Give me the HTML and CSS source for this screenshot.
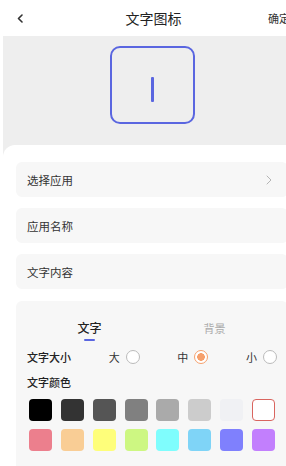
FILE: index.html
```html
<!DOCTYPE html>
<html lang="zh">
<head>
<meta charset="utf-8">
<title>文字图标</title>
<link rel="stylesheet" href="styles.css">
</head>
<body>
<div class="page">
  <header class="nav">
    <span class="nav-back">
      <svg width="6" height="9" viewBox="0 0 6 9"><path d="M5 1 L1.5 4.5 L5 8" fill="none" stroke="#333" stroke-width="1.6" stroke-linecap="round" stroke-linejoin="round"/></svg>
    </span>
    <h1 class="nav-title">文字图标</h1>
    <span class="nav-ok">确定</span>
  </header>

  <section class="preview">
    <div class="icon-box"><span class="icon-bar"></span></div>
  </section>

  <section class="sheet">
    <div class="field">
      <span>选择应用</span>
      <svg class="chev" width="6" height="10" viewBox="0 0 6 10"><path d="M1 1 L5 5 L1 9" fill="none" stroke="#b5b5b5" stroke-width="1" stroke-linecap="round" stroke-linejoin="round"/></svg>
    </div>
    <div class="field"><span>应用名称</span></div>
    <div class="field"><span>文字内容</span></div>

    <div class="panel">
      <div class="tabs">
        <div class="tab active"><span>文字</span><i class="tab-line"></i></div>
        <div class="tab"><span>背景</span></div>
      </div>
      <div class="size-row">
        <span class="label">文字大小</span>
        <span class="opt">大<i class="radio"></i></span>
        <span class="opt">中<i class="radio on"></i></span>
        <span class="opt">小<i class="radio"></i></span>
      </div>
      <div class="label color-label">文字颜色</div>
      <div class="swatches">
        <i class="sw" style="background:#000000"></i>
        <i class="sw" style="background:#333333"></i>
        <i class="sw" style="background:#555555"></i>
        <i class="sw" style="background:#808080"></i>
        <i class="sw" style="background:#aaaaaa"></i>
        <i class="sw" style="background:#cccccc"></i>
        <i class="sw" style="background:#f0f1f4"></i>
        <i class="sw sel" style="background:#ffffff"></i>
      </div>
      <div class="swatches">
        <i class="sw" style="background:#ec7f8d"></i>
        <i class="sw" style="background:#f9cd95"></i>
        <i class="sw" style="background:#fefe7a"></i>
        <i class="sw" style="background:#cdf782"></i>
        <i class="sw" style="background:#7ffdfd"></i>
        <i class="sw" style="background:#7fd4f7"></i>
        <i class="sw" style="background:#7f80fd"></i>
        <i class="sw" style="background:#c27ffd"></i>
      </div>
    </div>
  </section>
</div>
</body>
</html>
```

FILE: styles.css
```css
* { box-sizing: border-box; margin: 0; padding: 0; }
html, body { width: 286px; height: 466px; overflow: hidden; background: #ffffff; }
body {
  font-family: "Noto Sans CJK SC", "Noto Sans", sans-serif;
  color: #333333;
}
.page { width: 304px; }

.nav {
  height: 36px;
  display: grid;
  grid-template-columns: 60px 1fr 60px;
  align-items: center;
  padding: 0 14px 0 17px;
}
.nav-back { display: flex; align-items: center; padding-top: 1px; }
.nav-title {
  text-align: center;
  font-size: 14px;
  font-weight: 400;
  color: #222222;
  line-height: 20px;
}
.nav-ok {
  justify-self: end;
  font-size: 11px;
  color: #333333;
  line-height: 16px;
}

.preview {
  margin-left: 3px;
  background: #eeeeee;
  height: 121px;
  display: flex;
  justify-content: center;
  padding-top: 10px;
  padding-right: 3px;
}
.icon-box {
  width: 85px;
  height: 78px;
  border: 2px solid #5a66e0;
  border-radius: 10px;
  display: flex;
  align-items: center;
  justify-content: center;
}
.icon-bar {
  width: 2.5px;
  height: 25px;
  background: #5a66e0;
  border-radius: 1px;
  margin-left: 1px;
  margin-top: 9px;
}

.sheet {
  position: relative;
  margin-top: -12px;
  margin-left: 3px;
  background: #ffffff;
  border-radius: 12px 12px 0 0;
  padding: 17px 16px 0 13px;
}

.field {
  height: 35px;
  background: #f7f7f7;
  border-radius: 6px;
  display: flex;
  align-items: center;
  justify-content: space-between;
  padding: 0 16px 0 11px;
  font-size: 11.5px;
  color: #333333;
  margin-bottom: 11px;
}
.chev { display: block; }

.panel {
  margin-top: 12px;
  background: #f7f7f7;
  border-radius: 6px;
  padding: 19px 11px 20px;
}
.tabs { display: flex; }
.tab {
  flex: 1;
  display: flex;
  flex-direction: column;
  align-items: center;
  font-size: 11px;
  line-height: 16px;
  color: #aaaaaa;
  height: 21px;
}
.tab.active { color: #222222; font-weight: 500; font-size: 12px; }
.tab-line {
  display: block;
  width: 11px;
  height: 2px;
  border-radius: 1px;
  background: #5a66e0;
  margin-top: 3px;
}

.size-row {
  margin-top: 6px;
  height: 20px;
  display: flex;
  align-items: center;
  justify-content: space-between;
}
.label {
  font-size: 11px;
  font-weight: 500;
  color: #222222;
  line-height: 16px;
}
.opt {
  display: flex;
  align-items: center;
  gap: 6px;
  font-size: 11px;
  color: #333333;
}
.radio {
  display: block;
  width: 14px;
  height: 14px;
  border: 1px solid #bbbbbb;
  border-radius: 50%;
  background: #ffffff;
}
.radio.on {
  border: 1.5px solid #f6a06c;
  background: radial-gradient(circle, #f6a06c 0 3.6px, #ffffff 4px);
}

.color-label { margin-top: 7px; }

.swatches {
  display: flex;
  justify-content: space-between;
  padding: 0 2px;
  margin-top: 9px;
}
.swatches + .swatches { margin-top: 8px; }
.sw {
  display: block;
  width: 23px;
  height: 22px;
  border-radius: 4px;
}
.sw.sel { border: 1px solid #d9655f; }
```
